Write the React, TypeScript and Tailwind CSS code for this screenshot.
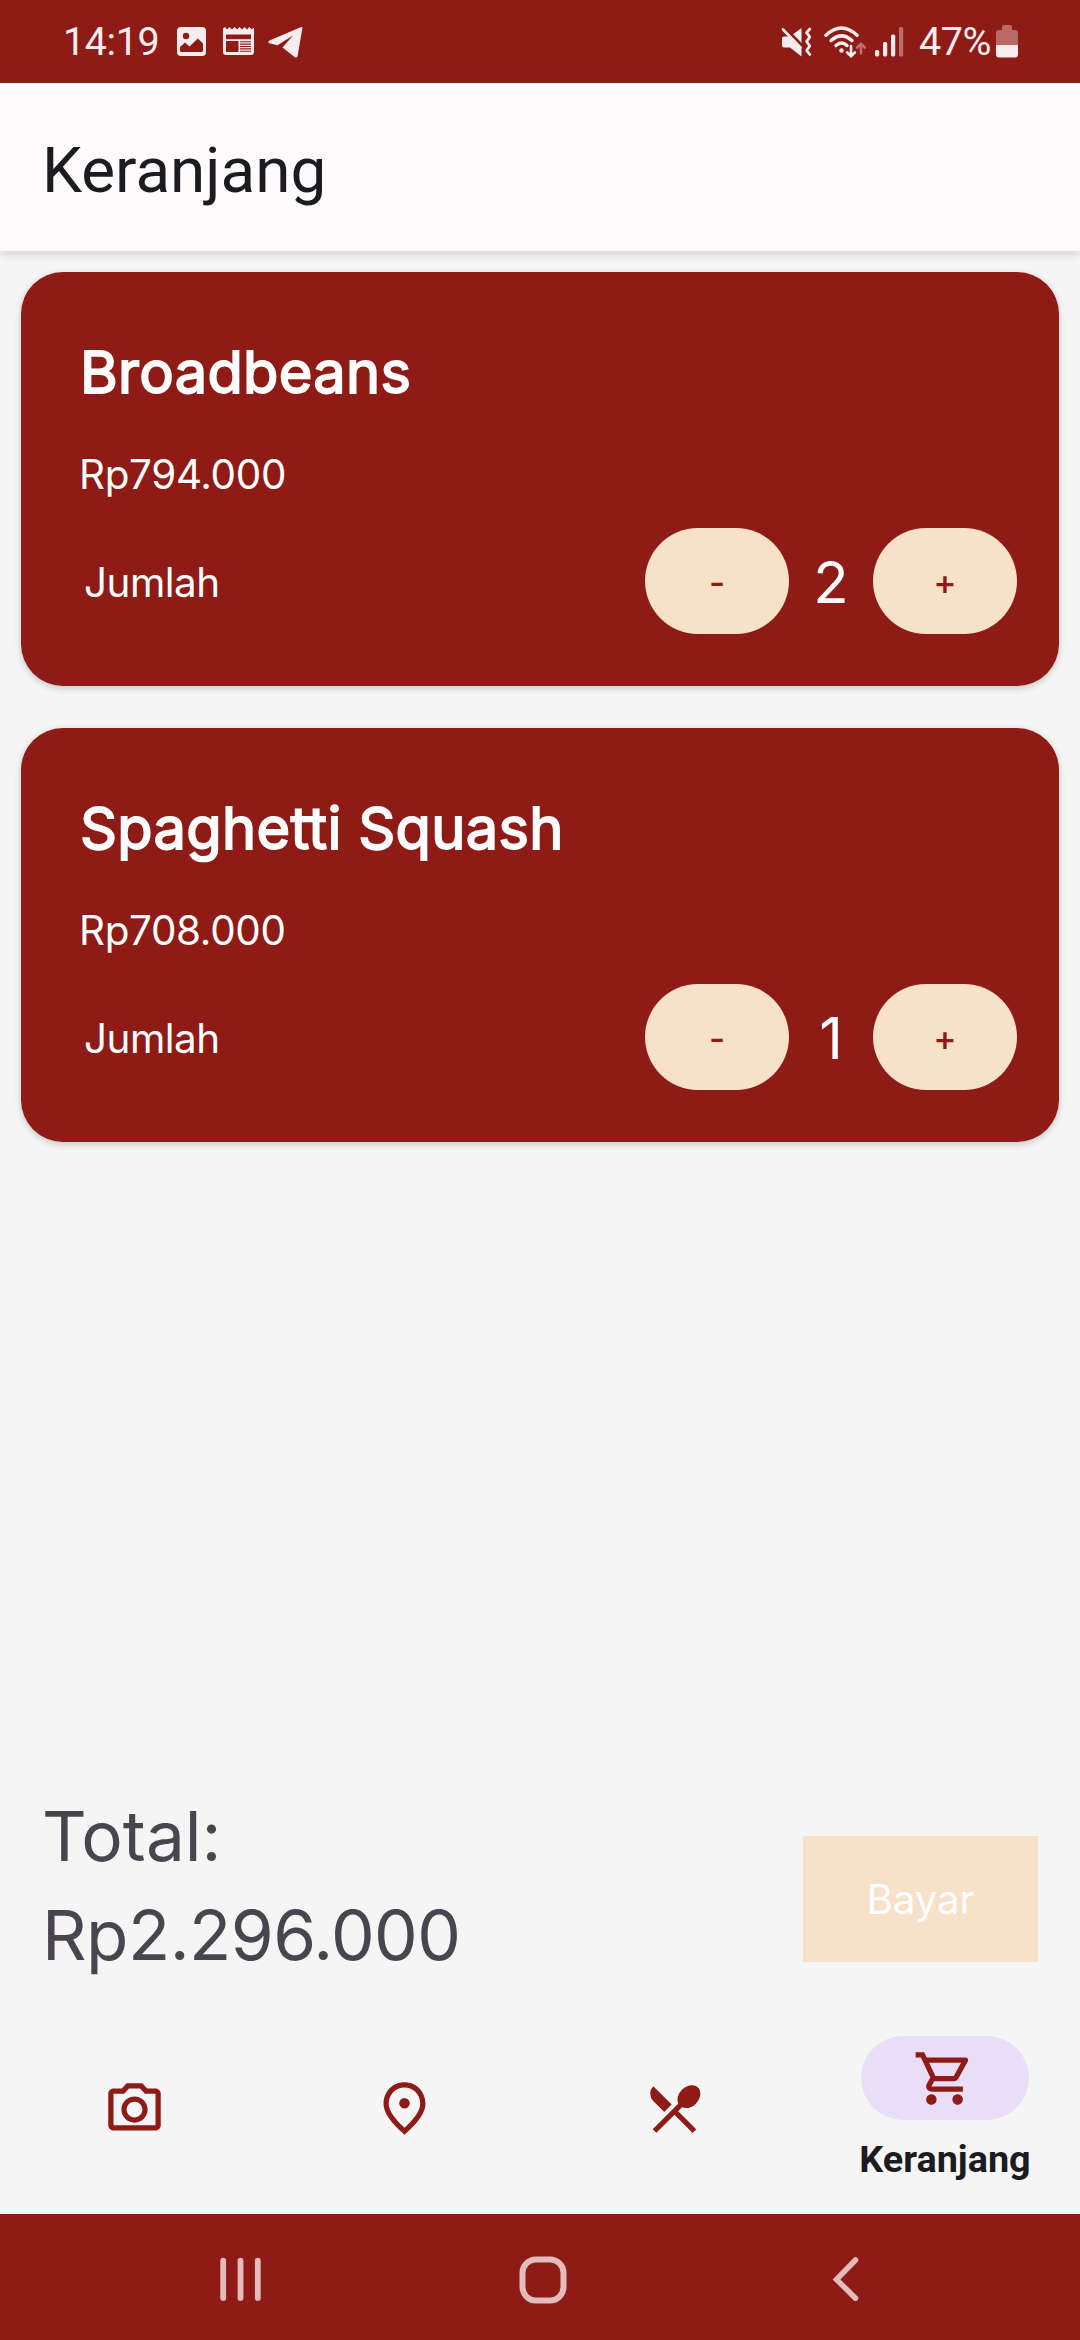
import React from "react";
import {
  MdOutlinePhotoCamera,
  MdOutlineShoppingCart,
  MdRestaurantMenu,
} from "react-icons/md";

type Item = { name: string; price: string; qty: number };

const items: Item[] = [
  { name: "Broadbeans", price: "Rp794.000", qty: 2 },
  { name: "Spaghetti Squash", price: "Rp708.000", qty: 1 },
];

function StatusBar() {
  return (
    <div className="flex h-[83px] items-center bg-[#8f1b17] pl-[63px] pr-[62px] text-[#f8ecee]">
      <span className="w-[114px] whitespace-nowrap font-['Roboto'] text-[39.5px] leading-[46px] tracking-[-0.4px]">
        14:19
      </span>
      <svg className="h-[29px] w-[29px]" viewBox="0 0 29 29" fill="none">
        <rect width="29" height="29" rx="4" fill="currentColor" />
        <circle cx="9" cy="9" r="3.2" fill="#8f1b17" />
        <path d="M3 20 8 15.500l4.500 4L20.800 11.500 26 16.500v7q0 1.500-1.500 1.500h-20Q3 25 3 23.500z" fill="#8f1b17" />
      </svg>
      <svg className="ml-[17px] h-[29px] w-[31px]" viewBox="0 0 31 29" fill="none">
        <path
          d="M0 1.500 2 0l2 2.500L6.500 0 9 2.500 11.500 0 14 2.500 16.500 0 19 2.500 21.500 0 24 2.500 26.500 0l2.200 2.500L31 .5V25a3 3 0 0 1-3 3H3a3 3 0 0 1-3-3z"
          fill="currentColor"
        />
        <path d="M3 7.500h25v4.700H3zM3 14h12.500v11H3z" fill="#8f1b17" />
        <path d="M17 14.700h11M17 17.100h11M17 19.500h11M17 21.900h11M17 24.300h11" stroke="#8f1b17" strokeWidth="1.100" />
      </svg>
      <svg className="ml-[14px] mt-[2px] h-[31px] w-[35px]" viewBox="0 0 35 31">
        <path d="M34.500.4 29.600 29q-.7 2.500-3 1L14.500 20.600 25 8.500 9.500 18.200 1.500 16.300q-2.500-1 0-2.800L32 .6q2-.9 2.500-.2z" fill="currentColor" />
      </svg>

      <svg className="ml-auto h-[30px] w-[31px]" viewBox="0 0 31 30" fill="none">
        <path d="M1 11.500q0-2 2-2h6L20.500 1v28.500L9 20.500H3q-2 0-2-2z" fill="currentColor" />
        <path d="M.5-1.500 21 19.500" stroke="#8f1b17" strokeWidth="4.500" />
        <path d="M2 2.500 19.500 20.500" stroke="currentColor" strokeWidth="2.600" strokeLinecap="round" />
        <path d="m28.800 2-3.200 3.700 3.200 4.300-3.200 4.500 3.200 4.500-3.200 4.500 3.200 4" stroke="currentColor" strokeWidth="2.800" strokeLinecap="round" strokeLinejoin="round" />
      </svg>
      <svg className="ml-[12px] h-[32px] w-[42px]" viewBox="0 0 42 32" fill="none" stroke="currentColor" strokeLinecap="round">
        <path d="M2 9.300q15.500-14.500 31 0" strokeWidth="3.400" />
        <path d="M7 14.600q10.500-9.500 21 0" strokeWidth="3.400" />
        <path d="M12 19.500q5.500-5 11 0" strokeWidth="3.400" />
        <circle cx="17.500" cy="24.500" r="2.200" fill="currentColor" stroke="none" />
        <path d="M27 20v10m-3.800-3.500L27 30.200l3.800-3.700" strokeWidth="2.600" />
        <path d="M37 27.500V18m-3.800 3.500L37 17.800l3.800 3.700" strokeWidth="2.600" strokeOpacity=".4" />
      </svg>
      <svg className="ml-[9px] mt-[1px] h-[30px] w-[29px]" viewBox="0 0 29 30" fill="currentColor">
        <rect x="0" y="23" width="4.200" height="6.500" rx="1.500" />
        <rect x="8" y="15" width="4.200" height="14.500" rx="1.500" />
        <rect x="16" y="7.500" width="4.200" height="22" rx="1.500" />
        <rect x="24" y="0" width="4.200" height="29.500" rx="1.500" fillOpacity=".4" />
      </svg>
      <span className="ml-[15px] w-[73px] whitespace-nowrap font-['Roboto'] text-[39.5px] leading-[46px] tracking-[-0.5px]">
        47%
      </span>
      <svg className="ml-[4px] h-[33px] w-[22px]" viewBox="0 0 22 33">
        <path d="M6 2q0-2 2-2h6q2 0 2 2v3h3q3 0 3 3v12H0V8q0-3 3-3h3z" fill="#b96a67" />
        <path d="M0 20h22v9.500q0 3-3 3H3q-3 0-3-3z" fill="currentColor" />
      </svg>
    </div>
  );
}

function StepButton({ children }: { children: React.ReactNode }) {
  return (
    <button className="h-[106px] w-[144px] rounded-full bg-[#f8e1c9] pt-[2px] text-[35px] font-medium leading-none text-[#8f1b17]">
      {children}
    </button>
  );
}

function CartCard({ item }: { item: Item }) {
  return (
    <div className="h-[414px] rounded-[42px] bg-[#8f1b17] pr-[42px] text-white shadow-[0_2px_7px_rgba(0,0,0,0.2)]">
      <h2 className="ml-[59px] h-[138px] whitespace-nowrap pt-[65px] text-[57.75px] font-normal leading-[70px] tracking-[0.3px] [-webkit-text-stroke:1.800px_white]">
        {item.name}
      </h2>
      <p className="ml-[58px] mt-[40px] text-[40.4px] leading-[50px] tracking-[-0.33px]">{item.price}</p>
      <div className="mt-[28px] flex h-[106px] items-center">
        <span className="ml-[63px] pt-[3px] text-[40.4px] leading-[50px] tracking-[-0.5px]">Jumlah</span>
        <div className="ml-auto flex items-center">
          <StepButton>-</StepButton>
          <span className="w-[84px] pt-[2px] text-center text-[58px] leading-[70px]">{item.qty}</span>
          <StepButton>+</StepButton>
        </div>
      </div>
    </div>
  );
}

function PinIcon() {
  return (
    <svg className="h-[63px] w-[63px]" viewBox="0 0 24 24" fill="currentColor">
      <path
        fillRule="evenodd"
        d="M12 2c4.200 0 8 3.220 8 8.200 0 3.320-2.670 7.250-8 11.800-5.330-4.550-8-8.480-8-11.800C4 5.220 7.800 2 12 2zm6 8.200C18 6.570 15.350 4 12 4s-6 2.570-6 6.200c0 2.340 1.950 5.440 6 9.140 4.050-3.700 6-6.800 6-9.140z"
      />
      <circle cx="12" cy="10" r="2" />
    </svg>
  );
}

function BottomNav() {
  return (
    <nav className="grid h-[210px] grid-cols-4 text-[#8f1b17]">
      <div className="flex justify-center pr-[1px] pt-[74px]">
        <MdOutlinePhotoCamera size={63} />
      </div>
      <div className="flex justify-center pr-[1px] pt-[73px]">
        <PinIcon />
      </div>
      <div className="flex justify-center pr-[1px] pt-[73px]">
        <MdRestaurantMenu size={63} />
      </div>
      <div className="flex flex-col items-center pt-[32px]">
        <div className="flex h-[84px] w-[168px] items-center justify-center rounded-full bg-[#e8def8] pr-[1px]">
          <MdOutlineShoppingCart size={63} />
        </div>
        <span className="mt-[17px] font-['Roboto'] text-[37.8px] font-bold leading-[44px] text-[#1c1b1f]">
          Keranjang
        </span>
      </div>
    </nav>
  );
}

function SystemNav() {
  return (
    <div className="flex h-[126px] items-center bg-[#8f1b17] pl-[219px] pt-[3px] text-[#e3bbba]">
      <svg className="h-[46px] w-[43px]" viewBox="0 0 43 46" stroke="currentColor" strokeWidth="5.800" strokeLinecap="round">
        <path d="M4.200 4.700v37.200M21.500 4.700v37.200M38.800 4.700v37.200" />
      </svg>
      <svg className="ml-[257px] mt-[2px] h-[48px] w-[48px]" viewBox="0 0 48 48" fill="none" stroke="currentColor" strokeWidth="6">
        <rect x="3.500" y="3.500" width="41" height="41" rx="13.500" />
      </svg>
      <svg className="ml-[264px] mt-[2px] h-[46px] w-[30px]" viewBox="0 0 30 46" fill="none" stroke="currentColor" strokeWidth="5.500" strokeLinecap="round">
        <path d="M24.500 3 5.500 22.500l19 18.700" />
      </svg>
    </div>
  );
}

export default function App() {
  return (
    <div className="flex h-[2340px] w-[1080px] flex-col overflow-hidden bg-[#f5f5f5] font-['Inter',sans-serif]">
      <StatusBar />
      <header className="z-10 flex h-[168px] items-center bg-[#fffbfd] pl-[42px] pt-[7px] shadow-[0_2px_10px_rgba(0,0,0,0.18)]">
        <h1 className="font-['Roboto'] text-[63.8px] font-normal leading-[76px] text-[#1c1b1f]">Keranjang</h1>
      </header>
      <main className="flex flex-1 flex-col gap-[42px] px-[21px] pt-[21px]">
        {items.map((item) => (
          <CartCard key={item.name} item={item} />
        ))}
      </main>
      <section className="flex h-[220px] items-start justify-between pl-[42px] pr-[42px] text-[#49454f]">
        <p className="pt-[3px] text-[69.3px] leading-[99px]">
          Total:
          <br />
          <span className="tracking-[-0.55px]">Rp2.296.000</span>
        </p>
        <button className="mt-[52px] h-[126px] w-[235px] bg-[#f8e1c9] pt-[2px] text-[40.4px] leading-none tracking-[-0.2px] text-white">
          Bayar
        </button>
      </section>
      <BottomNav />
      <SystemNav />
    </div>
  );
}
